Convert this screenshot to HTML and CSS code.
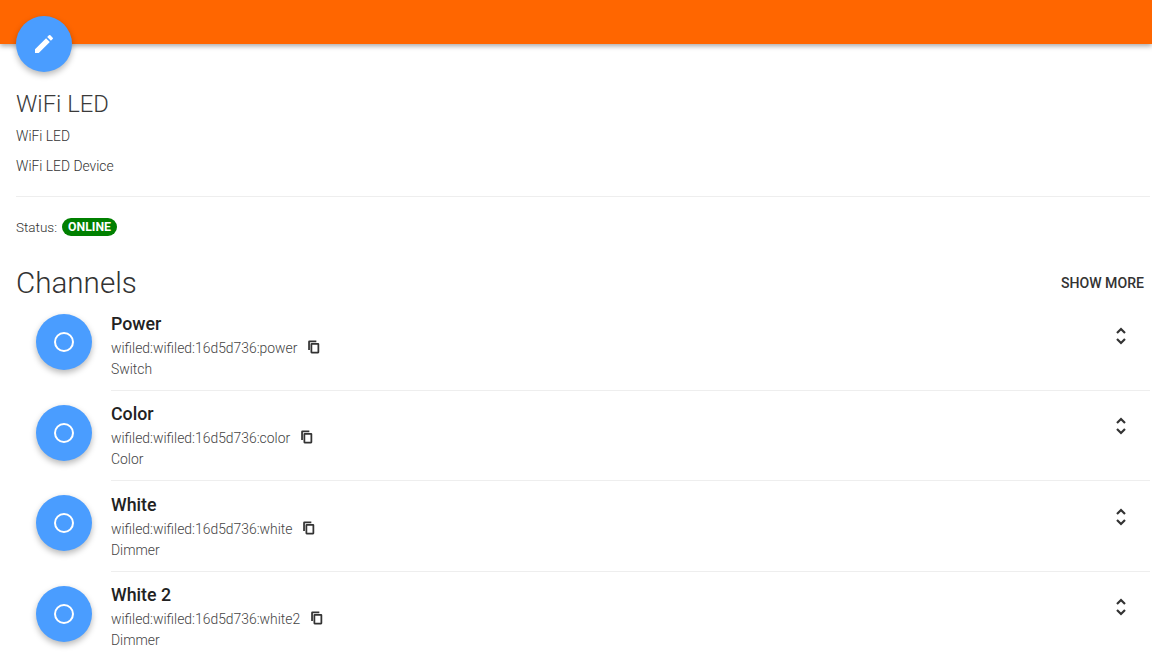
FILE: index.html
```html
<!DOCTYPE html>
<html lang="en">
<head>
    <meta charset="UTF-8">
    <meta name="viewport" content="width=device-width, initial-scale=1.0">
    <title>WiFi LED</title>
    <link rel="stylesheet" href="styles.css">
</head>
<body>

    <header class="toolbar"></header>

    <button class="fab edit-fab" aria-label="Edit">
        <svg width="24" height="24" viewBox="0 0 24 24"><path fill="#fff" d="M3 17.25V21h3.75L17.81 9.94l-3.75-3.75L3 17.25zM20.71 7.04a1 1 0 0 0 0-1.41l-2.34-2.34a1 1 0 0 0-1.41 0l-1.83 1.83 3.75 3.75 1.83-1.83z"/></svg>
    </button>

    <main class="content">
        <section class="thing-info">
            <h1>WiFi LED</h1>
            <p class="info-line">WiFi LED</p>
            <p class="info-line">WiFi LED Device</p>
        </section>

        <div class="status">
            <span>Status:</span>
            <span class="badge">ONLINE</span>
        </div>

        <div class="channels-head">
            <h2>Channels</h2>
            <span class="show-more">SHOW MORE</span>
        </div>

        <ul class="channel-list">
            <li class="channel">
                <div class="fab channel-icon"><span class="ring"></span></div>
                <div class="channel-body">
                    <div class="channel-text">
                        <div class="channel-name">Power</div>
                        <div class="channel-uid">wifiled:wifiled:16d5d736:power
                            <svg class="copy" width="14" height="14" viewBox="0 0 24 24"><path fill="#333" d="M16 1H4a2 2 0 0 0-2 2v14h3V4h11V1zm3 4H8a2 2 0 0 0-2 2v14a2 2 0 0 0 2 2h11a2 2 0 0 0 2-2V7a2 2 0 0 0-2-2zm-1 15H9V8h9v12z"/></svg>
                        </div>
                        <div class="channel-type">Switch</div>
                    </div>
                    <svg class="expand" width="24" height="24" viewBox="0 0 24 24"><path fill="none" stroke="#333" stroke-width="2.2" d="M8 9l4-4 4 4M8 15l4 4 4-4"/></svg>
                </div>
            </li>
            <li class="channel">
                <div class="fab channel-icon"><span class="ring"></span></div>
                <div class="channel-body">
                    <div class="channel-text">
                        <div class="channel-name">Color</div>
                        <div class="channel-uid">wifiled:wifiled:16d5d736:color
                            <svg class="copy" width="14" height="14" viewBox="0 0 24 24"><path fill="#333" d="M16 1H4a2 2 0 0 0-2 2v14h3V4h11V1zm3 4H8a2 2 0 0 0-2 2v14a2 2 0 0 0 2 2h11a2 2 0 0 0 2-2V7a2 2 0 0 0-2-2zm-1 15H9V8h9v12z"/></svg>
                        </div>
                        <div class="channel-type">Color</div>
                    </div>
                    <svg class="expand" width="24" height="24" viewBox="0 0 24 24"><path fill="none" stroke="#333" stroke-width="2.2" d="M8 9l4-4 4 4M8 15l4 4 4-4"/></svg>
                </div>
            </li>
            <li class="channel">
                <div class="fab channel-icon"><span class="ring"></span></div>
                <div class="channel-body">
                    <div class="channel-text">
                        <div class="channel-name">White</div>
                        <div class="channel-uid">wifiled:wifiled:16d5d736:white
                            <svg class="copy" width="14" height="14" viewBox="0 0 24 24"><path fill="#333" d="M16 1H4a2 2 0 0 0-2 2v14h3V4h11V1zm3 4H8a2 2 0 0 0-2 2v14a2 2 0 0 0 2 2h11a2 2 0 0 0 2-2V7a2 2 0 0 0-2-2zm-1 15H9V8h9v12z"/></svg>
                        </div>
                        <div class="channel-type">Dimmer</div>
                    </div>
                    <svg class="expand" width="24" height="24" viewBox="0 0 24 24"><path fill="none" stroke="#333" stroke-width="2.2" d="M8 9l4-4 4 4M8 15l4 4 4-4"/></svg>
                </div>
            </li>
            <li class="channel">
                <div class="fab channel-icon"><span class="ring"></span></div>
                <div class="channel-body">
                    <div class="channel-text">
                        <div class="channel-name">White 2</div>
                        <div class="channel-uid">wifiled:wifiled:16d5d736:white2
                            <svg class="copy" width="14" height="14" viewBox="0 0 24 24"><path fill="#333" d="M16 1H4a2 2 0 0 0-2 2v14h3V4h11V1zm3 4H8a2 2 0 0 0-2 2v14a2 2 0 0 0 2 2h11a2 2 0 0 0 2-2V7a2 2 0 0 0-2-2zm-1 15H9V8h9v12z"/></svg>
                        </div>
                        <div class="channel-type">Dimmer</div>
                    </div>
                    <svg class="expand" width="24" height="24" viewBox="0 0 24 24"><path fill="none" stroke="#333" stroke-width="2.2" d="M8 9l4-4 4 4M8 15l4 4 4-4"/></svg>
                </div>
            </li>
        </ul>
    </main>

</body>
</html>
```

FILE: styles.css
```css
html, body {
    margin: 0;
    padding: 0;
    height: 670px;
    overflow: hidden;
    background-color: #fff;
    font-family: Roboto, sans-serif;
    color: #444;
}

.toolbar {
    height: 44px;
    background-color: #ff6600;
    box-shadow: 0 2px 5px rgba(0, 0, 0, 0.35);
}

.fab {
    width: 56px;
    height: 56px;
    border-radius: 50%;
    border: none;
    padding: 0;
    background-color: #4a9dff;
    box-shadow: 0 3px 6px rgba(0, 0, 0, 0.28);
    display: flex;
    align-items: center;
    justify-content: center;
    flex-shrink: 0;
}

/* sits over the toolbar edge */
.edit-fab {
    position: absolute;
    left: 16px;
    top: 16px;
}

.content {
    padding: 45px 2px 0 16px;
}

.thing-info {
    border-bottom: 1px solid #eee;
    height: 107px;
}

h1 {
    margin: 0 0 9px;
    font-size: 23.8px;
    line-height: 30px;
    font-weight: 300;
    color: #3a3a3a;
}

.info-line {
    margin: 0 0 14px;
    font-size: 13.85px;
    line-height: 16px;
    font-weight: 300;
    color: #333;
}

.status {
    display: flex;
    align-items: center;
    gap: 5px;
    margin-top: 21px;
    height: 18px;
    font-size: 13.5px;
    font-weight: 300;
    color: #333;
}

.badge {
    background-color: #008000;
    color: #fff;
    font-size: 12.3px;
    font-weight: 700;
    line-height: 18px;
    padding: 0 6px;
    border-radius: 9px;
}

.channels-head {
    display: flex;
    align-items: center;
    justify-content: space-between;
    margin-top: 33px;
    padding-right: 6px;
    height: 28px;
}

h2 {
    margin: 0;
    font-size: 29.6px;
    font-weight: 300;
    color: #333;
}

.show-more {
    font-size: 14.1px;
    font-weight: 500;
    color: #333;
}

.channel-list {
    list-style: none;
    margin: 3px 0 0;
    padding: 0;
}

.channel {
    display: flex;
    height: 90.6px;
}

.channel-icon {
    margin: 14px 19px 0 20px;
}

.ring {
    width: 20px;
    height: 20px;
    box-sizing: border-box;
    border: 2px solid #fff;
    border-radius: 50%;
}

.channel-body {
    flex: 1;
    display: flex;
    justify-content: space-between;
    align-items: flex-start;
    border-bottom: 1px solid #eee;
    padding: 13.6px 17px 0 0;
}

.channel:last-child .channel-body {
    border-bottom: none;
}

.channel-name {
    font-size: 17.8px;
    line-height: 20px;
    font-weight: 500;
    color: #222;
}

.channel-uid {
    margin-top: 4px;
    font-size: 13.9px;
    line-height: 20px;
    font-weight: 300;
    color: #444;
}

.channel-type {
    margin-top: 1px;
    font-size: 13.9px;
    line-height: 20px;
    font-weight: 300;
    color: #444;
}

.copy {
    margin-left: 6px;
    vertical-align: -1px;
}

.expand {
    margin-top: 10px;
}
```
